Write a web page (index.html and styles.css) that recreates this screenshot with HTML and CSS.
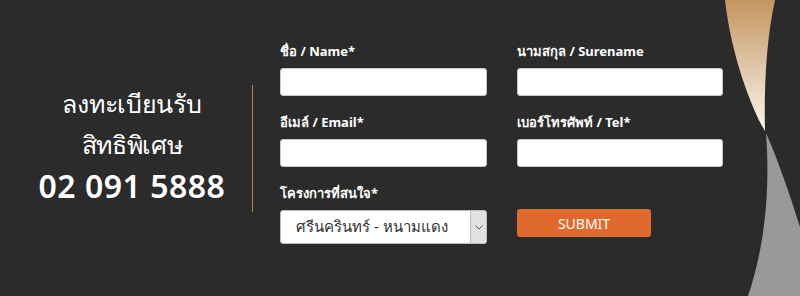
FILE: index.html
```html
<!DOCTYPE html>
<html lang="th">
<head>
  <meta charset="UTF-8">
  <title>ลงทะเบียนรับสิทธิพิเศษ</title>
  <link rel="stylesheet" href="styles.css">
</head>
<body>

  <div class="register">
    <div class="intro">
      <div class="intro-text">
        <div class="intro-lines">
          <p>ลงทะเบียนรับ</p>
          <p>สิทธิพิเศษ</p>
          <p class="tel">02 091 5888</p>
        </div>
      </div>
    </div>

    <form class="form" onsubmit="return false">
      <div class="field">
        <label>ชื่อ / Name*</label>
        <input type="text">
      </div>
      <div class="field">
        <label>นามสกุล / Surename</label>
        <input type="text">
      </div>
      <div class="field">
        <label>อีเมล์ / Email*</label>
        <input type="text">
      </div>
      <div class="field">
        <label>เบอร์โทรศัพท์ / Tel*</label>
        <input type="text">
      </div>
      <div class="field">
        <label>โครงการที่สนใจ*</label>
        <div class="select">
          <span>ศรีนครินทร์ - หนามแดง</span>
          <span class="arrow">
            <svg width="8" height="5" viewBox="0 0 8 5"><path d="M0.5 0.5 L4 4 L7.5 0.5" fill="none" stroke="#555" stroke-width="1"/></svg>
          </span>
        </div>
      </div>
      <div class="field field-submit">
        <button type="submit" class="submit">SUBMIT</button>
      </div>
    </form>
  </div>

  <!-- ลายโค้งด้านขวา -->
  <svg class="deco" width="800" height="296" viewBox="0 0 800 296">
    <defs>
      <linearGradient id="gold" x1="0" y1="0" x2="0" y2="1">
        <stop offset="0" stop-color="#c4955f"/>
        <stop offset="1" stop-color="#fbf6ee"/>
      </linearGradient>
    </defs>
    <path d="M725 0 L775 0 C766 40 764 90 765 131 C752 110 731 55 725 0 Z" fill="url(#gold)"/>
    <path d="M766 133 C778 160 790 195 800 227 L800 296 L748 296 C762 255 771 200 766 133 Z" fill="#999999"/>
  </svg>

</body>
</html>
```

FILE: styles.css
```css
body {
  margin: 0;
  width: 800px;
  height: 296px;
  background-color: #2b2b2b;
  color: white;
  font-family: 'Noto Sans', 'Liberation Sans', sans-serif;
  overflow: hidden;
  position: relative;
}

.register {
  display: flex;
  height: 100%;
}

.intro {
  width: 253px;
  display: flex;
  align-items: center;
}

.intro-text {
  width: 100%;
  height: 127px;
  box-sizing: border-box;
  border-right: 1px solid #b8873f;
  text-align: center;
  padding-left: 12px;
  display: flex;
  flex-direction: column;
  justify-content: center;
}

.intro-lines {
  padding-bottom: 8px;
}

.intro-text p {
  margin: 0;
  font-size: 25px;
  line-height: 41px;
  font-weight: 500;
  letter-spacing: -0.3px;
}

.intro-text .tel {
  font-size: 32px;
  font-weight: 600;
  letter-spacing: 0.5px;
}

.form {
  display: grid;
  grid-template-columns: 207px 206px;
  column-gap: 30px;
  row-gap: 17px;
  padding: 42px 0 0 27px;
  align-content: start;
}

.field label {
  display: block;
  font-size: 13px;
  line-height: 18px;
  font-weight: bold;
  margin-bottom: 8px;
}

.field input {
  display: block;
  box-sizing: border-box;
  width: 100%;
  height: 28px;
  border: 1px solid #c8c8c8;
  border-radius: 3px;
  background: white;
}

.select {
  display: flex;
  align-items: center;
  justify-content: space-between;
  box-sizing: border-box;
  height: 34px;
  background: white;
  border: 1px solid #bdbdbd;
  border-radius: 3px;
  color: #333;
  font-size: 15px;
  padding-left: 15px;
}

.select .arrow {
  display: flex;
  align-items: center;
  justify-content: center;
  width: 15px;
  height: 32px;
  background: #e1e1e1;
  border-left: 1px solid #bdbdbd;
  border-radius: 0 3px 3px 0;
}

.field-submit {
  padding-top: 25px;
}

.submit {
  display: block;
  width: 134px;
  height: 28px;
  border: none;
  border-radius: 3px;
  background-color: #e06a2e;
  color: white;
  font-family: inherit;
  font-size: 14px;
  cursor: pointer;
}

.deco {
  position: absolute;
  top: 0;
  left: 0;
  pointer-events: none;
}
```
